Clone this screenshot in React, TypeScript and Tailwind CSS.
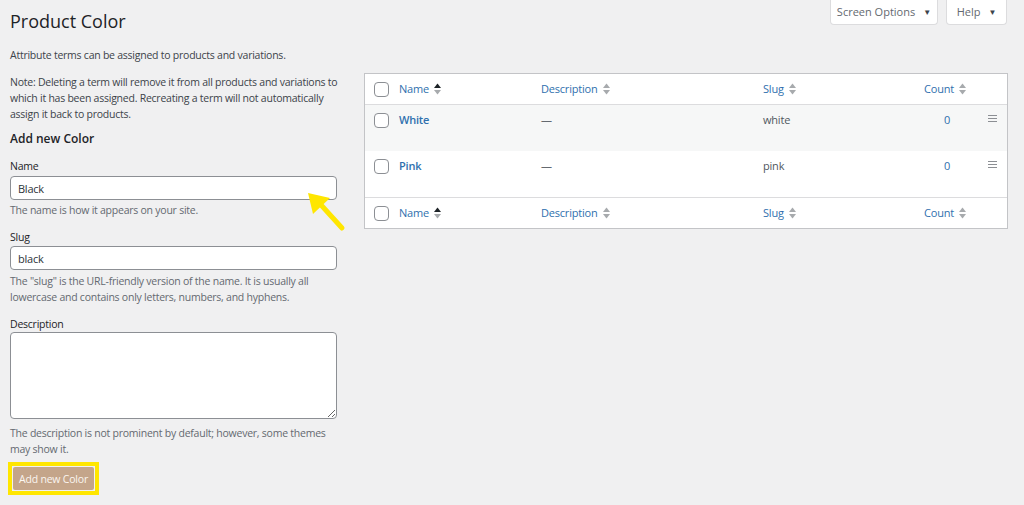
import { useState } from "react";

const font = { fontFamily: '"Open Sans", "Noto Sans", sans-serif' };

type Term = { id: number; name: string; slug: string; count: number };

const terms: Term[] = [
  { id: 1, name: "White", slug: "white", count: 0 },
  { id: 2, name: "Pink", slug: "pink", count: 0 },
];

const SortArrows = ({ active }: { active?: boolean }) => (
  <svg width="7" height="12" viewBox="0 0 7 12" className="ml-[5px] shrink-0">
    <path d="M3.5 0.5 L7 5 L0 5 Z" fill={active ? "#1d2327" : "#a7aaad"} />
    <path d="M0 7 L7 7 L3.5 11.5 Z" fill="#a7aaad" />
  </svg>
);

const Checkbox = () => (
  <span className="block h-[15px] w-[15px] rounded-[4px] border border-[#8c8f94] bg-white" />
);

const HeaderRow = ({ top }: { top?: boolean }) => (
  <div
    className={`grid h-[31px] grid-cols-[34px_142px_222px_150px_64px_1fr] items-center text-[11px] tracking-[-0.2px] text-[#2f70ae] ${
      top ? "border-b border-[#dcdcde]" : "border-t border-[#dcdcde]"
    }`}
  >
    <div className="pl-[9px]">
      <Checkbox />
    </div>
    <div className="flex items-center">
      Name
      <SortArrows active />
    </div>
    <div className="flex items-center">
      Description
      <SortArrows />
    </div>
    <div className="flex items-center">
      Slug
      <SortArrows />
    </div>
    <div className="flex items-center justify-center">
      Count
      <SortArrows />
    </div>
    <div />
  </div>
);

export default function App() {
  const [name, setName] = useState("Black");
  const [slug, setSlug] = useState("black");

  return (
    <div className="relative min-h-[505px] bg-[#f0f0f1] text-[#3c434a]" style={font}>
      {/* screen meta links */}
      <div className="absolute right-[17px] top-0 flex gap-[8px] text-[11px] text-[#646970]">
        <button className="flex h-[25px] w-[108px] items-center justify-center gap-[8px] rounded-b-[4px] border border-t-0 border-[#dcdcde] bg-white">
          Screen Options <span className="text-[8px] text-[#3c434a]">▼</span>
        </button>
        <button className="flex h-[25px] w-[61px] items-center justify-center gap-[8px] rounded-b-[4px] border border-t-0 border-[#dcdcde] bg-white">
          Help <span className="text-[8px] text-[#3c434a]">▼</span>
        </button>
      </div>

      <div className="px-[10px] pt-[8px]">
        <h1 className="text-[18px] leading-[26px] text-[#1d2327]">Product Color</h1>

        <div className="mt-[13px] flex gap-[27px]">
          {/* Left column: add form */}
          <div className="w-[327px] shrink-0 text-[10.5px] leading-[16px] tracking-[-0.24px]">
            <p>Attribute terms can be assigned to products and variations.</p>
            <p className="mt-[11px] w-[335px]">
              Note: Deleting a term will remove it from all products and variations to which it has
              been assigned. Recreating a term will not automatically assign it back to products.
            </p>
            <h2 className="mt-[9px] text-[12px] font-semibold leading-[16px] tracking-normal text-[#1d2327]">
              Add new Color
            </h2>

            <label className="mt-[11px] block text-[#1d2327]">Name</label>
            <input
              value={name}
              onChange={(e) => setName(e.target.value)}
              className="mt-[2px] block h-[24px] w-full rounded-[4px] border border-[#8c8f94] bg-white px-[7px] text-[11px] text-[#2c3338] outline-none"
            />
            <p className="mt-[2px] text-[#646970]">The name is how it appears on your site.</p>

            <label className="mt-[11px] block text-[#1d2327]">Slug</label>
            <input
              value={slug}
              onChange={(e) => setSlug(e.target.value)}
              className="mt-[1px] block h-[24px] w-full rounded-[4px] border border-[#8c8f94] bg-white px-[7px] text-[11px] text-[#2c3338] outline-none"
            />
            <p className="mt-[3px] text-[#646970]">
              The "slug" is the URL-friendly version of the name. It is usually all lowercase and
              contains only letters, numbers, and hyphens.
            </p>

            <label className="mt-[11px] block text-[#1d2327]">Description</label>
            <textarea
              className="block h-[87px] w-full rounded-[4px] border border-[#8c8f94] bg-white outline-none"
              readOnly
            />
            <p className="mt-[6px] text-[#646970]">
              The description is not prominent by default; however, some themes may show it.
            </p>

            <div className="-ml-[2px] mt-[5px] inline-block border-[4px] border-[#ffe600] p-px">
              <button className="h-[23px] rounded-[2px] bg-[#c4a58a] px-[6px] text-[10.5px] tracking-[-0.2px] text-[#fbf6f1]">
                Add new Color
              </button>
            </div>
          </div>

          {/* Right column: terms table */}
          <div className="mt-[26px] w-[644px] self-start border border-[#c3c4c7] bg-white text-[11px] tracking-[-0.2px]">
            <HeaderRow top />
            {terms.map((t, i) => (
              <div
                key={t.id}
                className={`grid h-[46px] grid-cols-[34px_142px_222px_150px_64px_1fr] items-start pt-[7px] ${
                  i % 2 === 0 ? "bg-[#f6f7f7]" : "bg-white"
                }`}
              >
                <div className="pl-[9px] pt-[1px]">
                  <Checkbox />
                </div>
                <div className="font-semibold text-[#2f70ae]">{t.name}</div>
                <div className="text-[#646970]">—</div>
                <div className="text-[#50575e]">{t.slug}</div>
                <div className="pl-[4px] text-center text-[#2f70ae]">{t.count}</div>
                <div className="flex justify-center pt-[3px]">
                  <svg width="9" height="7" viewBox="0 0 9 7">
                    <path d="M0 0.5 H9 M0 3.5 H9 M0 6.5 H9" stroke="#8c8f94" strokeWidth="1" />
                  </svg>
                </div>
              </div>
            ))}
            <HeaderRow />
          </div>
        </div>
      </div>

      {/* yellow arrow callout */}
      <svg className="pointer-events-none absolute left-[300px] top-[185px]" width="50" height="50" viewBox="300 185 50 50">
        <path d="M322 206 L342 228" stroke="#ffe600" strokeWidth="5" strokeLinecap="round" />
        <path d="M308 193 L313 214 L330 198 Z" fill="#ffe600" />
      </svg>
    </div>
  );
}
